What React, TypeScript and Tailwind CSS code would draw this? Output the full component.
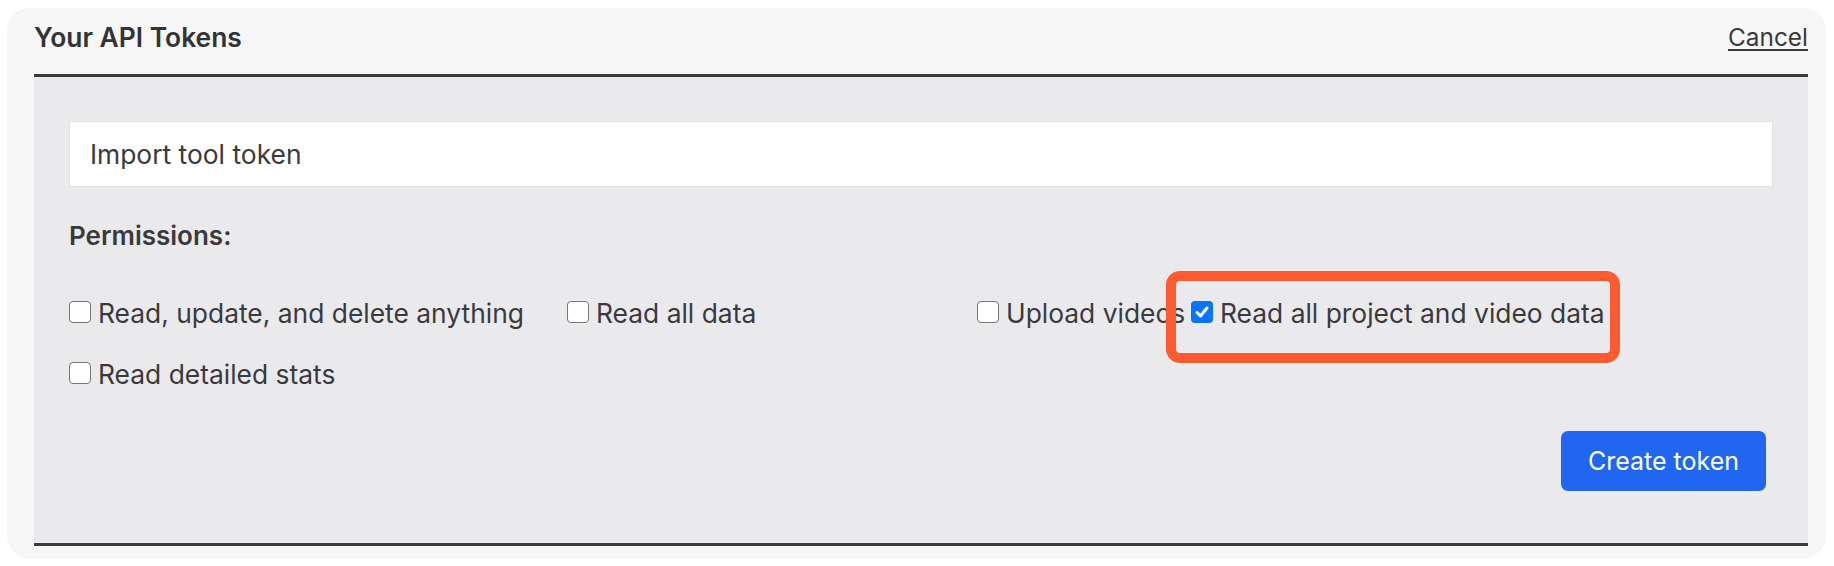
import React from "react";

function Box({ checked }: { checked?: boolean }) {
  if (checked) {
    return (
      <span className="flex h-[22px] w-[22px] shrink-0 items-center justify-center rounded-[4px] bg-[#0a74fd] -mt-[3px]">
        <svg width="16" height="16" viewBox="0 0 16 16" fill="none">
          <path d="M3 8.5 L6.5 12 L13 4" stroke="white" strokeWidth="3" strokeLinecap="round" strokeLinejoin="round" />
        </svg>
      </span>
    );
  }
  return (
    <span className="block h-[22px] w-[22px] shrink-0 rounded-[4px] border-[1.5px] border-[#767676] bg-white -mt-[3px]" />
  );
}

function Perm({ label, checked, children }: { label: string; checked?: boolean; children?: React.ReactNode }) {
  return (
    <label className="relative flex h-[32px] items-center gap-[7px] whitespace-nowrap">
      <Box checked={checked} />
      <span>{label}</span>
      {children}
    </label>
  );
}

export default function App() {
  return (
    <div className="min-h-[566px] w-full bg-white pt-[8px] pb-[7px] pl-[7px] pr-[8px] font-[Inter,sans-serif] text-[26.4px] text-[#3a3a3c]">
      <div className="rounded-[22px] bg-[#f6f6f6] pl-[27px] pr-[18px] pb-[12px]">
        <div className="flex h-[66px] items-start justify-between pt-[13px]">
          <h1 className="text-[26.4px] leading-[32px] font-semibold text-[#333335]">Your API Tokens</h1>
          <a className="text-[24.4px] leading-[32px] text-[#3a3a3c] underline underline-offset-[3px] decoration-[2px]">Cancel</a>
        </div>
        <div className="border-y-[3px] border-[#3a3a3c] bg-[#eaeaec] px-[35px] pt-[44px] pb-[52px]">
          <div className="flex h-[66px] items-center border border-[#e2e2e4] bg-white pl-[20px]">
            <span className="leading-[32px]">Import tool token</span>
          </div>
          <div className="mt-[33px] text-[26px] leading-[32px] font-semibold">Permissions:</div>
          <div className="mt-[45px] grid grid-cols-[498px_410px_214px_auto] gap-y-[29px] leading-[32px]">
            <Perm label="Read, update, and delete anything" />
            <Perm label="Read all data" />
            <Perm label="Upload videos" />
            <Perm label="Read all project and video data" checked>
              <span className="pointer-events-none absolute left-[-25px] top-[-26px] h-[92px] w-[454px] rounded-[14px] border-[10px] border-[#fc5b31]" />
            </Perm>
            <Perm label="Read detailed stats" />
          </div>
          <div className="mt-[41px] flex justify-end pr-[7px]">
            <button className="flex h-[60px] items-center rounded-[7px] bg-[#2066f0] px-[27px] text-[25px] leading-[32px] text-white">
              Create token
            </button>
          </div>
        </div>
      </div>
    </div>
  );
}
